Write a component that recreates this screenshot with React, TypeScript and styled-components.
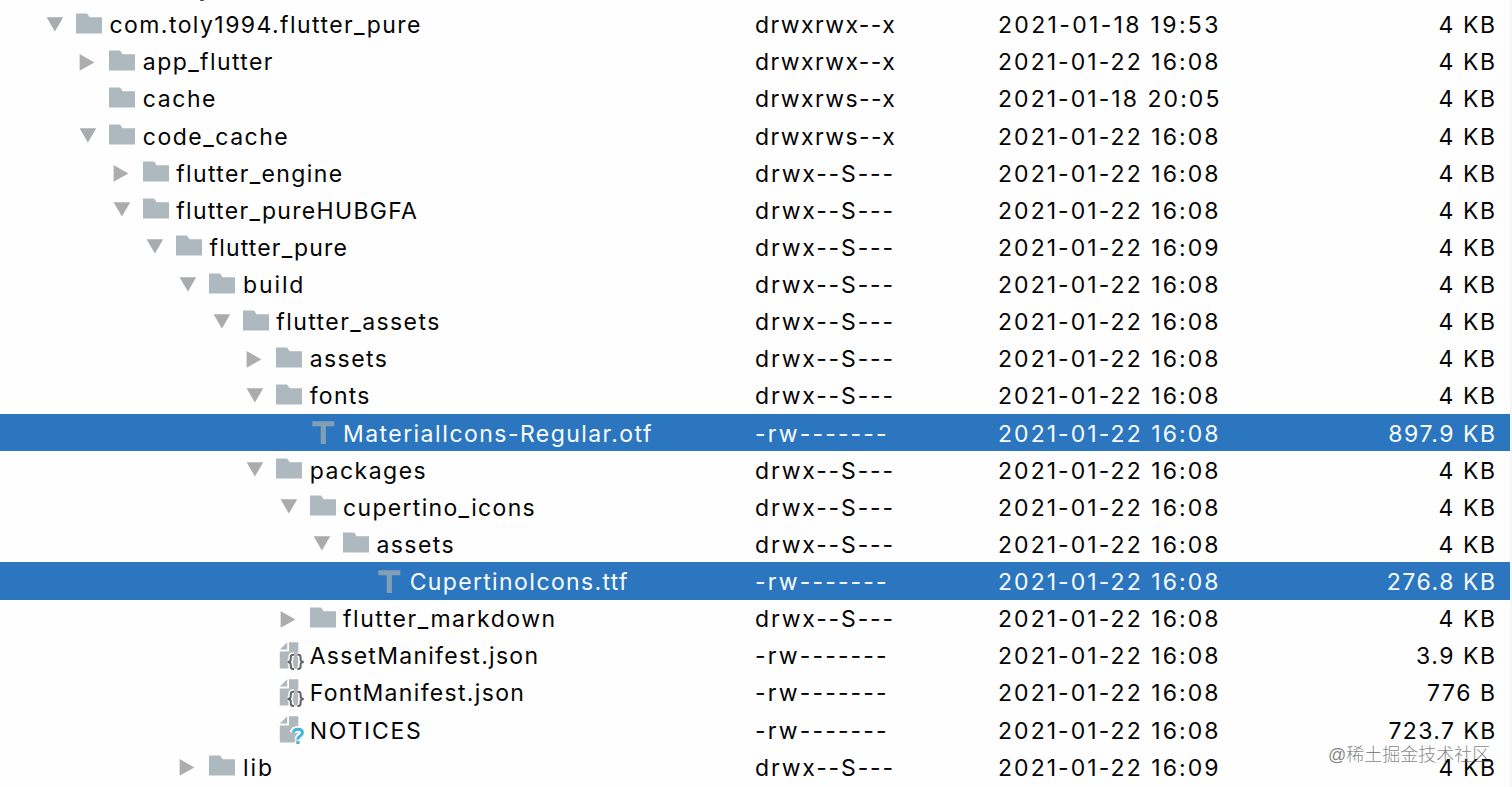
import React from 'react';
import styled, { createGlobalStyle } from 'styled-components';

type Kind = 'folder' | 'font' | 'json' | 'unknown';
type Toggle = 'open' | 'closed' | 'none';

interface Entry {
  name: string;
  spacing: number;
  depth: number;
  kind: Kind;
  toggle: Toggle;
  mode: string;
  date: string;
  size: string;
  selected?: boolean;
}

const GlobalStyle = createGlobalStyle`
  * {
    box-sizing: border-box;
  }

  body {
    margin: 0;
    overflow: hidden;
    background: #fff;
  }
`;

const Page = styled.main`
  position: relative;
  width: 1512px;
  height: 787px;
  overflow: hidden;
  background: #fefefe;
  color: #040404;
  border-right: 2px solid #f6f6f6;
  font-family: Inter, 'Liberation Sans', sans-serif;
  font-size: 23px;
`;

const PreviousRow = styled.div`
  height: 5.6px;
  padding-left: 200px;
`;

const Descender = styled.div`
  width: 4px;
  height: 1px;
  border-radius: 0 0 2px 2px;
  background: #444;
`;

const Row = styled.div<{ $selected?: boolean }>`
  display: grid;
  grid-template-columns: 755px 243px 1fr;
  align-items: center;
  height: 37.125px;
  padding-right: 13.4px;
  white-space: pre;
  color: ${({ $selected }) => ($selected ? '#f8fcff' : 'inherit')};
  background: ${({ $selected }) => ($selected ? '#2b76be' : 'transparent')};
`;

const NameCell = styled.div<{ $depth: number }>`
  display: flex;
  align-items: center;
  padding-left: ${({ $depth }) => 43 + $depth * 33.36}px;
`;

const Slot = styled.svg`
  display: block;
  flex: none;
  width: 33px;
  height: 37px;
`;

const Label = styled.span<{ $spacing: number }>`
  padding-top: 2.6px;
  line-height: 34.6px;
  letter-spacing: ${({ $spacing }) => $spacing}px;
`;

const Name = styled(Label)`
  padding-left: 0.5px;
`;

const DateAndSize = styled.div`
  display: flex;
  justify-content: space-between;
`;

const Watermark = styled.div`
  position: absolute;
  left: 1328px;
  top: 743px;
  color: rgba(90, 90, 90, 0.75);
  font-family: 'Liberation Sans', 'Noto Sans CJK SC', sans-serif;
  font-size: 18px;
  font-weight: 300;
  line-height: 24px;
  white-space: nowrap;
`;

function Arrow({ toggle }: { toggle: Toggle }) {
  return (
    <Slot viewBox="0 0 33 37">
      {toggle === 'open' && <path d="M3.6 11.3h16.6L11.9 25.6z" fill="#a9abac" />}
      {toggle === 'closed' && <path d="M3.6 11v16.8l14.8-8.4z" fill="#adadae" />}
    </Slot>
  );
}

function FilePage() {
  return (
    <>
      <path d="M3.8 12.6L11.2 5.2v7.4z" fill="#b0b8be" />
      <path d="M13 5.2h9.3v26.4H3.8V14.4H13z" fill="#b0b8be" />
    </>
  );
}

function Icon({ kind }: { kind: Kind }) {
  if (kind === 'folder') {
    return (
      <Slot viewBox="0 0 33 37">
        <path d="M0 7.5h10.3q.9 0 1.4.8l1.9 3H26v16.2H0z" fill="#aeb8bf" />
      </Slot>
    );
  }
  if (kind === 'font') {
    return (
      <Slot viewBox="0 0 33 37">
        <path d="M2.3 7.2h22v5.1h-8.4v17.6h-5.2V12.3H2.3z" fill="#829fb6" />
      </Slot>
    );
  }
  if (kind === 'json') {
    const brace =
      'M18 17.8h-.8q-2.4 0-2.4 2.4v2.1q0 2.6-3.2 2.6 3.2 0 3.2 2.6v2.1q0 2.4 2.4 2.4h.8M21.4 17.8h.8q2.4 0 2.4 2.4v2.1q0 2.6 3.2 2.6-3.2 0-3.2 2.6v2.1q0 2.4-2.4 2.4h-.8';
    return (
      <Slot viewBox="0 0 33 37">
        <FilePage />
        <path d={brace} fill="none" stroke="#fefefe" strokeWidth="5" />
        <path d="M19.8 20.4v9.2" stroke="#b0b8be" strokeWidth="3.4" strokeLinecap="round" />
        <path d={brace} fill="none" stroke="#626466" strokeWidth="2" />
      </Slot>
    );
  }
  const hook = 'M17.4 21.6q.3-3.4 4.6-3.4 4.4 0 4.4 3.3 0 1.8-2 3.2-2.4 1.5-2.4 3.3v.6';
  return (
    <Slot viewBox="0 0 33 37">
      <FilePage />
      <path d={`${hook}M22 29.6v3.2`} fill="none" stroke="#fefefe" strokeWidth="6.6" />
      <path d={hook} fill="none" stroke="#43b4df" strokeWidth="3" />
      <path d="M20.3 30h3.2v3h-3.2z" fill="#43b4df" />
    </Slot>
  );
}

const folder = (
  name: string,
  spacing: number,
  depth: number,
  toggle: Toggle,
  mode = 'drwx--S---',
  date = '2021-01-22 16:08',
): Entry => ({ name, spacing, depth, kind: 'folder', toggle, mode, date, size: '4 KB' });

const file = (name: string, spacing: number, depth: number, kind: Kind, size: string, selected = false): Entry => ({
  name,
  spacing,
  depth,
  kind,
  toggle: 'none',
  mode: '-rw-------',
  date: '2021-01-22 16:08',
  size,
  selected,
});

const entries: Entry[] = [
  folder('com.toly1994.flutter_pure', 1.43, 0, 'open', 'drwxrwx--x', '2021-01-18 19:53'),
  folder('app_flutter', 1.4, 1, 'closed', 'drwxrwx--x'),
  folder('cache', 1.55, 1, 'none', 'drwxrws--x', '2021-01-18 20:05'),
  folder('code_cache', 1.5, 1, 'open', 'drwxrws--x'),
  folder('flutter_engine', 1.36, 2, 'closed'),
  folder('flutter_pureHUBGFA', 1.31, 2, 'open'),
  folder('flutter_pure', 1.15, 3, 'open', 'drwx--S---', '2021-01-22 16:09'),
  folder('build', 1.9, 4, 'open'),
  folder('flutter_assets', 1.42, 5, 'open'),
  folder('assets', 1.45, 6, 'closed'),
  folder('fonts', 1.3, 6, 'open'),
  file('MaterialIcons-Regular.otf', 1.43, 7, 'font', '897.9 KB', true),
  folder('packages', 1.5, 6, 'open'),
  folder('cupertino_icons', 1.32, 7, 'open'),
  folder('assets', 1.45, 8, 'open'),
  file('CupertinoIcons.ttf', 1.32, 9, 'font', '276.8 KB', true),
  folder('flutter_markdown', 1.52, 7, 'closed'),
  file('AssetManifest.json', 1.28, 6, 'json', '3.9 KB'),
  file('FontManifest.json', 1.32, 6, 'json', '776 B'),
  file('NOTICES', 1.75, 6, 'unknown', '723.7 KB'),
  folder('lib', 2, 4, 'closed', 'drwx--S---', '2021-01-22 16:09'),
];

const modeSpacing: Record<string, number> = {
  'drwxrwx--x': 1.4,
  'drwxrws--x': 1.4,
  'drwx--S---': 1.85,
  '-rw-------': 2.15,
};

function EntryRow({ entry }: { entry: Entry }) {
  return (
    <Row $selected={entry.selected}>
      <NameCell $depth={entry.depth}>
        <Arrow toggle={entry.toggle} />
        <Icon kind={entry.kind} />
        <Name $spacing={entry.spacing}>{entry.name}</Name>
      </NameCell>
      <Label $spacing={modeSpacing[entry.mode]}>{entry.mode}</Label>
      <DateAndSize>
        <Label $spacing={entry.date.endsWith('19:53') ? 2.33 : 2.05}>{entry.date}</Label>
        <Label $spacing={entry.size === '723.7 KB' ? 1.4 : 1.55}>{entry.size}</Label>
      </DateAndSize>
    </Row>
  );
}

export default function App() {
  return (
    <Page>
      <GlobalStyle />
      <PreviousRow>
        <Descender />
      </PreviousRow>
      {entries.map((entry, index) => (
        <EntryRow key={index} entry={entry} />
      ))}
      <Watermark>@稀土掘金技术社区</Watermark>
    </Page>
  );
}
